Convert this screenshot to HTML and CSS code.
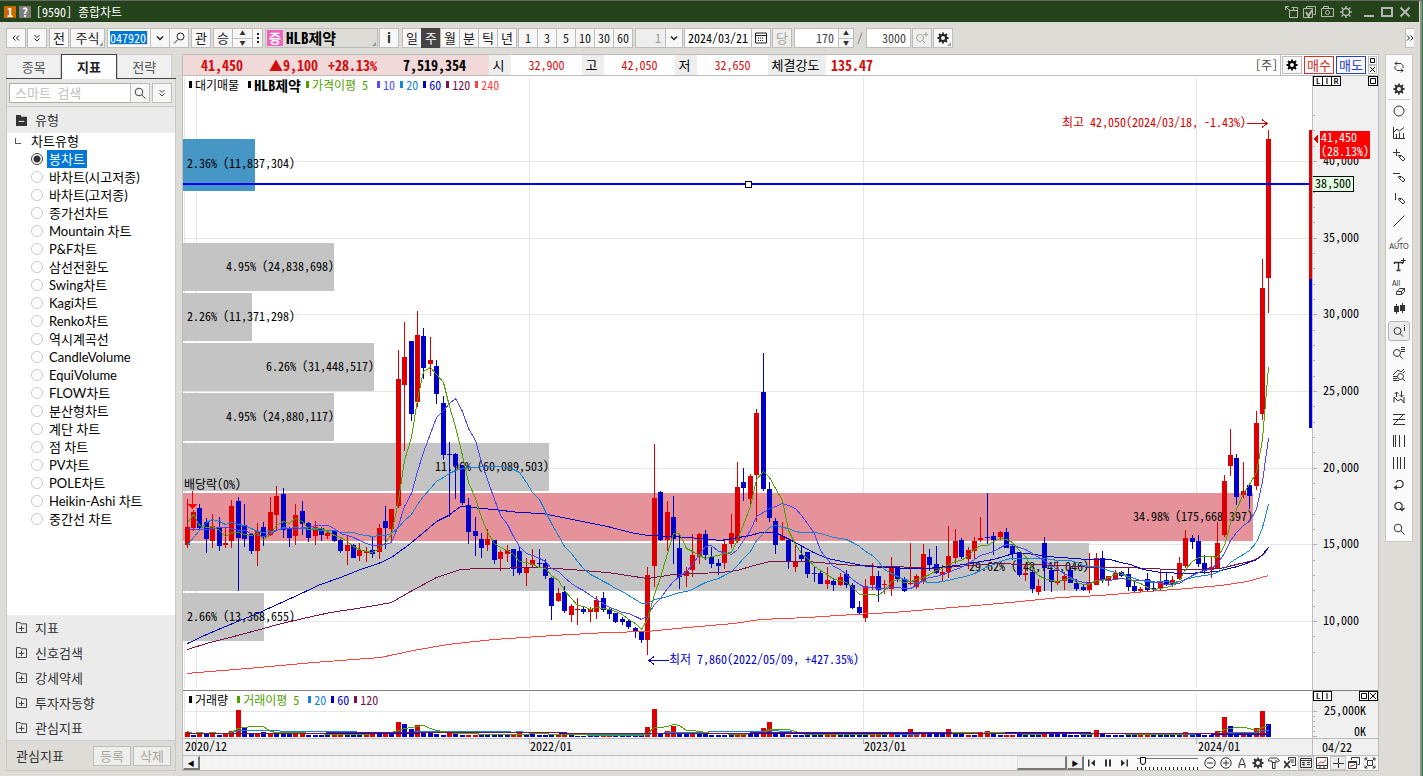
FILE: index.html
```html
<!DOCTYPE html>
<html lang="ko">
<head>
<meta charset="utf-8">
<title>[9590] 종합차트</title>
<link rel="stylesheet" href="styles.css">
</head>
<body>
<svg class="sprite" aria-hidden="true">
  <symbol id="gear" viewBox="0 0 12 12"><circle cx="6" cy="6" r="3" fill="none" stroke="currentColor" stroke-width="2"/><path d="M6 .5v2M6 9.500v2M.5 6h2M9.500 6h2M2 2l1.500 1.500M8.500 8.500L10 10M10 2L8.500 3.500M3.500 8.500L2 10" stroke="currentColor" stroke-width="1.800"/></symbol>
  <symbol id="gear-thin" viewBox="0 0 12 12"><circle cx="6" cy="6" r="3.500" fill="none" stroke="currentColor" stroke-width="1.500"/><path d="M6 0v2M6 10v2M0 6h2M10 6h2M1.500 1.500l1.500 1.500M9 9l1.500 1.500M10.500 1.500L9 3M3 9l-1.500 1.500" stroke="currentColor" stroke-width="1.500"/></symbol>
  <symbol id="search" viewBox="0 0 12 12"><g fill="none" stroke="currentColor"><circle cx="5" cy="5" r="3.800"/><path d="M8 8l3.500 3.500"/></g></symbol>
  <symbol id="search-l" viewBox="0 0 12 12"><g fill="none" stroke="currentColor"><circle cx="7.500" cy="4.500" r="3.500"/><path d="M5 7.500L1 11.500"/></g></symbol>
  <symbol id="left2" viewBox="0 0 12 12"><path d="M5.500 3.500L3 6l2.500 2.500M9 3.500L6.500 6 9 8.500" fill="none" stroke="currentColor"/></symbol>
  <symbol id="right2" viewBox="0 0 12 12"><path d="M3 3.500L5.500 6 3 8.500M6.500 3.500L9 6 6.500 8.500" fill="none" stroke="currentColor"/></symbol>
  <symbol id="down2" viewBox="0 0 12 12"><path d="M3.500 3L6 5.500 8.500 3M3.500 6.500L6 9l2.500-2.500" fill="none" stroke="currentColor"/></symbol>
  <symbol id="chev" viewBox="0 0 12 12"><path d="M3 4.500l3 3 3-3" fill="none" stroke="currentColor" stroke-width="1.500"/></symbol>
  <symbol id="cal" viewBox="0 0 12 12"><path d="M.5 1h11v10H.5zM.5 3.500h11" fill="none" stroke="currentColor"/><path d="M3 6h6M3 8.500h6" stroke="currentColor" stroke-dasharray="1 1"/></symbol>
  <symbol id="zoom-plus" viewBox="0 0 12 12"><g fill="none" stroke="currentColor"><circle cx="4" cy="6" r="3.500"/><path d="M6.500 8.500L9 11M10 0v5M7.500 2.500h5"/></g></symbol>
  <symbol id="win-out" viewBox="0 0 14 12"><g fill="none" stroke="currentColor"><path d="M4.500 3.500v8h8v-10h-6M5 4.500h8M8.500 2v2M.5.500l4 4M.5 4V.500H4"/></g></symbol>
  <symbol id="win-check" viewBox="0 0 14 12"><g fill="none" stroke="currentColor"><path d="M3.500 2.500v-2h9v8h-2M.5 2.500h9v9h-9z"/><path d="M3 6l2.500 4L9 4" stroke-width="2"/></g></symbol>
  <symbol id="camera" viewBox="0 0 14 12"><g fill="none" stroke="currentColor"><path d="M.5 2.500h12v8H.5zM2.500 2V.500h5V2"/><circle cx="6.500" cy="6.500" r="2"/></g></symbol>
  <symbol id="folder-plus" viewBox="0 0 12 12"><path d="M.5.500h4l1 1.500h6v9.500H.5zM6 4v6M3 7h6" fill="none" stroke="currentColor"/></symbol>
  <symbol id="folder-minus" viewBox="0 0 12 12"><path d="M0 0h5l1 2h6v10H0z" fill="currentColor"/><path d="M3 7h6" stroke="#fff"/></symbol>
  <symbol id="t-cycle" viewBox="0 0 14 14"><path d="M5 1.500L3 3.500l2 2M3 3.500h6l2 2V8M9 8.500l2 2-2 2M11 10.500H5l-2-2V6" fill="none" stroke="currentColor"/></symbol>
  <symbol id="t-circle" viewBox="0 0 14 14"><circle cx="7" cy="7" r="5" fill="none" stroke="currentColor"/></symbol>
  <symbol id="t-graph" viewBox="0 0 14 14"><path d="M1.500 1v11.500H13M4.500 12V8M7.500 12V6.500M11.500 12V7M2 6l3-3 2.500 2L12 1.500" fill="none" stroke="currentColor"/></symbol>
  <symbol id="t-plus-pen" viewBox="0 0 14 14"><path d="M4.500 1v7M1 4.500h7M6.500 7.500h3l3.500 3.500-2 2-4-4zM9 8l-2 2" fill="none" stroke="currentColor"/></symbol>
  <symbol id="t-line-pen" viewBox="0 0 14 14"><path d="M1 3.500h7M6.500 6.500h3l3.500 3.500-2 2-4-4zM9 7l-2 2" fill="none" stroke="currentColor"/></symbol>
  <symbol id="t-vline-pen" viewBox="0 0 14 14"><path d="M3.500 1v7M6.500 6.500h3l3.500 3.500-2 2-4-4zM9 7l-2 2" fill="none" stroke="currentColor"/></symbol>
  <symbol id="t-line" viewBox="0 0 14 14"><path d="M1.500 12.500l11-11" fill="none" stroke="currentColor"/></symbol>
  <symbol id="t-slash" viewBox="0 0 14 6"><path d="M5 5.500l5-5" fill="none" stroke="currentColor"/></symbol>
  <symbol id="t-text" viewBox="0 0 14 14"><path d="M2.500 6V4.500h8V6M6.500 4.500v8M4.500 12.500h4" fill="none" stroke="currentColor" stroke-width="1.400"/><path d="M11.500 0v5M9 2.500h5" stroke="currentColor"/></symbol>
  <symbol id="t-eraser" viewBox="0 0 14 8"><path d="M4.500 5.500l3-4h5v3l-3 3h-5zM4.500 4.500h5l3-3M9.500 4.500v3" fill="none" stroke="currentColor"/></symbol>
  <symbol id="t-candles" viewBox="0 0 14 14"><path d="M2 4h5v6H2zM8 3h5v6H8z" fill="currentColor"/><path d="M4.500 2v10M10.500 1v10" stroke="currentColor"/></symbol>
  <symbol id="t-search-i" viewBox="0 0 14 14"><g fill="none" stroke="currentColor"><circle cx="5.500" cy="7" r="3.500"/><path d="M8 9.500l3 3M12.500 3v4M12.500 1v1"/></g></symbol>
  <symbol id="t-search-list" viewBox="0 0 14 14"><g fill="none" stroke="currentColor"><circle cx="5" cy="7" r="3.500"/><path d="M7.500 9.500l3 3M9 1.500h4M9 3.500h4M9 5.500h4"/></g></symbol>
  <symbol id="t-search-wave" viewBox="0 0 14 14"><g fill="none" stroke="currentColor"><circle cx="8.500" cy="8.500" r="3"/><path d="M10.500 10.500L13 13M1 7l5-5 3 2 3-3M1 8.500h4M1 10.500h4M1 12.500h6M11 5l2-2"/></g></symbol>
  <symbol id="t-swap" viewBox="0 0 14 14"><path d="M2 12.500V7l4 4 3-2 3 4V7M4.500 7V2M2.500 4l2-2 2 2M9.500 1v6M7.500 5l2 2 2-2" fill="none" stroke="currentColor"/></symbol>
  <symbol id="t-fib" viewBox="0 0 14 14"><path d="M1 2.500h12M1 7.500h12M1 12.500h12M2 12l9-9" fill="none" stroke="currentColor"/></symbol>
  <symbol id="t-bars1" viewBox="0 0 14 14"><path d="M1.500 1v12M3.500 1v12M7.500 1v12M12.500 1v12" stroke="currentColor"/></symbol>
  <symbol id="t-bars2" viewBox="0 0 14 14"><path d="M1.500 1v12M5.500 1v12M8.500 1v12M12.500 1v12" stroke="currentColor"/></symbol>
  <symbol id="t-undo" viewBox="0 0 14 14"><path d="M4 4.500l2-2h3l2 2v3l-2 2H3M5 7.500l-2.500 2 2.500 2" fill="none" stroke="currentColor" stroke-width="1.200"/></symbol>
  <symbol id="t-redo" viewBox="0 0 14 14"><path d="M9 9.500H5l-2-2v-3l2-2h3l2 2v5M12.500 8L10 10.500 8 8" fill="none" stroke="currentColor" stroke-width="1.200"/></symbol>
  <symbol id="b-first" viewBox="0 0 12 12"><path d="M2 2.500h1.500v7H2zM9 2.500v7L5 6z" fill="currentColor"/></symbol>
  <symbol id="b-pause" viewBox="0 0 12 12"><path d="M3 2.500h2v7H3zM7 2.500h2v7H7z" fill="currentColor"/></symbol>
  <symbol id="b-last" viewBox="0 0 12 12"><path d="M8.500 2.500H10v7H8.500zM3 2.500v7L7 6z" fill="currentColor"/></symbol>
  <symbol id="b-minus" viewBox="0 0 12 12"><g fill="none" stroke="currentColor"><circle cx="6" cy="6" r="5.200"/><path d="M3 6h6"/></g></symbol>
  <symbol id="b-plus" viewBox="0 0 12 12"><g fill="none" stroke="currentColor"><circle cx="6" cy="6" r="5.200"/><path d="M3 6h6M6 3v6"/></g></symbol>
  <symbol id="b-a" viewBox="0 0 12 12"><path d="M3 11V8l2.500-6.500h1L9 8v3M3.500 7.500h5" fill="none" stroke="currentColor"/></symbol>
  <symbol id="b-hammer" viewBox="0 0 12 12"><path d="M.5 2.500l2-1.500h6l3 2.500-2 1.500-1.500-1.500v2h-4v-1.500H.5zM4.500 5.500v6h2.500v-6" fill="none" stroke="currentColor"/></symbol>
  <symbol id="b-excel" viewBox="0 0 12 12"><path d="M4.500 3V.500h7v8H8M6 3h4M7 5h3" fill="none" stroke="currentColor"/><path d="M0 4l6 7M6 4l-6 7" stroke="currentColor" stroke-width="1.800"/></symbol>
  <symbol id="b-table" viewBox="0 0 12 12"><path d="M.5 1.500h11v9H.5zM.5 3.500h11M4 5v4M2 5.500h2M2 7.500h2M7 5.500h3M7 7.500h3" fill="none" stroke="currentColor"/></symbol>
  <symbol id="b-chart" viewBox="0 0 12 12"><path d="M.5.500h11v11H.5zM.5 8.500h11M4 9v2M8 9v2" fill="none" stroke="currentColor"/><path d="M2 7l2.500-2L7 6l3-3.500" fill="none" stroke="#d33"/></symbol>
  <symbol id="b-cross" viewBox="0 0 12 12"><path d="M6.500 1v10M1 6.500h11" stroke="currentColor"/></symbol>
  <symbol id="b-wins" viewBox="0 0 12 12"><path d="M3.500 3V.500h8v7h-2M.5 4.500h8v7h-8zM.5 5.500h8" fill="none" stroke="currentColor"/><path d="M2 10l2-2 1 1 2-2" fill="none" stroke="#d33"/></symbol>
  <symbol id="b-fit" viewBox="0 0 12 12"><path d="M3.500 3.500h5v5h-5zM1 3.500V1h2.500M8.500 1H11v2.500M11 8.500V11H8.500M3.500 11H1V8.500M1 1l2.500 2.500M11 1L8.500 3.500M11 11L8.500 8.500M1 11l2.500-2.500" fill="none" stroke="currentColor"/></symbol>
</svg>

<div class="window">
  <header class="titlebar">
    <span class="badge badge-num">1</span><span class="badge badge-help">?</span>
    <h1 class="title">[9590] 종합차트</h1>
    <div class="title-tools">
      <button aria-label="분리"><svg class="i14"><use href="#win-out"/></svg></button>
      <button aria-label="선택"><svg class="i14"><use href="#win-check"/></svg></button>
      <button aria-label="캡처"><svg class="i14"><use href="#camera"/></svg></button>
      <button aria-label="설정"><svg class="i12"><use href="#gear-thin"/></svg></button>
      <button class="wc first" aria-label="최소화"><svg class="i12" viewBox="0 0 12 12"><path d="M1 10h10" stroke="currentColor" stroke-width="2"/></svg></button>
      <button class="wc" aria-label="최대화"><svg class="i12" viewBox="0 0 12 12"><path d="M1 2h10v8H1z" fill="none" stroke="currentColor" stroke-width="2"/></svg></button>
      <button class="wc" aria-label="닫기"><svg class="i12" viewBox="0 0 12 12"><path d="M1.500 1.500l9 9M10.500 1.500l-9 9" stroke="currentColor" stroke-width="2"/></svg></button>
    </div>
  </header>

  <div class="toolbar">
    <button class="btn" aria-label="이전"><svg class="i12"><use href="#left2"/></svg></button>
    <button class="btn" aria-label="펼치기"><svg class="i12"><use href="#down2"/></svg></button>
    <button class="btn after">전</button>
    <button class="btn w34 corner">주식</button>
    <div class="join after">
      <input class="field code" aria-label="종목코드" value="047920"><button class="btn" aria-label="종목 목록"><svg class="i12"><use href="#chev"/></svg></button><button class="btn" aria-label="종목 찾기"><svg class="i12"><use href="#search-l"/></svg></button>
    </div>
    <button class="btn after">관</button>
    <div class="join after"><button class="btn">승</button><span class="spin w20"><button aria-label="위">▲</button><button aria-label="아래">▼</button></span><button class="btn w10" aria-label="더보기"><svg class="dots" viewBox="0 0 2 10"><path d="M0 0h2v2H0zM0 4h2v2H0zM0 8h2v2H0z" fill="currentColor"/></svg></button></div>
    <button class="stock after corner"><span class="tag">증</span>HLB제약</button>
    <button class="btn info">i</button>
    <div class="join period"><button class="btn">일</button><button class="btn on">주</button><button class="btn">월</button><button class="btn">분</button><button class="btn">틱</button><button class="btn">년</button></div>
    <div class="join minutes"><button class="btn">1</button><button class="btn">3</button><button class="btn">5</button><button class="btn">10</button><button class="btn">30</button><button class="btn">60</button></div>
    <div class="join after"><input class="field off" aria-label="분 단위" value="1" disabled><button class="btn w18" aria-label="분 목록"><svg class="i12"><use href="#chev"/></svg></button></div>
    <div class="join"><input class="field date" aria-label="일자" value="2024/03/21"><button class="btn" aria-label="달력"><svg class="i12"><use href="#cal"/></svg></button></div>
    <button class="btn dim">당</button>
    <div class="join after"><input class="field num" aria-label="표시 봉수" value="170"><span class="spin w16"><button aria-label="증가">▲</button><button aria-label="감소">▼</button></span></div>
    <span class="slash">/</span>
    <input class="field num" aria-label="전체 봉수" value="3000">
    <button class="btn dim" aria-label="확대"><svg class="i12 open"><use href="#zoom-plus"/></svg></button>
    <button class="btn corner" aria-label="차트 설정"><svg class="i12"><use href="#gear"/></svg></button>
    <button class="btn more" aria-label="더보기"><svg class="i12"><use href="#right2"/></svg></button>
  </div>

  <div class="content">
    <aside class="side">
      <nav class="tabs"><button>종목</button><button class="active">지표</button><button>전략</button></nav>
      <div class="panel">
        <div class="searchrow"><div class="join grow"><input class="field" aria-label="검색" placeholder="스마트 검색"><button class="btn" aria-label="검색"><svg class="i12"><use href="#search"/></svg></button></div><button class="btn" aria-label="펼치기"><svg class="i12"><use href="#down2"/></svg></button></div>
        <button class="group head"><svg class="i11"><use href="#folder-minus"/></svg>유형</button>
        <fieldset class="types">
          <legend>차트유형</legend>
          <label><input type="radio" name="t" checked><span>봉차트</span></label>
          <label><input type="radio" name="t"><span>바차트(시고저종)</span></label>
          <label><input type="radio" name="t"><span>바차트(고저종)</span></label>
          <label><input type="radio" name="t"><span>종가선차트</span></label>
          <label><input type="radio" name="t"><span>Mountain 차트</span></label>
          <label><input type="radio" name="t"><span>P&amp;F차트</span></label>
          <label><input type="radio" name="t"><span>삼선전환도</span></label>
          <label><input type="radio" name="t"><span>Swing차트</span></label>
          <label><input type="radio" name="t"><span>Kagi차트</span></label>
          <label><input type="radio" name="t"><span>Renko차트</span></label>
          <label><input type="radio" name="t"><span>역시계곡선</span></label>
          <label><input type="radio" name="t"><span>CandleVolume</span></label>
          <label><input type="radio" name="t"><span>EquiVolume</span></label>
          <label><input type="radio" name="t"><span>FLOW차트</span></label>
          <label><input type="radio" name="t"><span>분산형차트</span></label>
          <label><input type="radio" name="t"><span>계단 차트</span></label>
          <label><input type="radio" name="t"><span>점 차트</span></label>
          <label><input type="radio" name="t"><span>PV차트</span></label>
          <label><input type="radio" name="t"><span>POLE차트</span></label>
          <label><input type="radio" name="t"><span>Heikin-Ashi 차트</span></label>
          <label><input type="radio" name="t"><span>중간선 차트</span></label>
        </fieldset>
        <button class="group"><svg class="i11"><use href="#folder-plus"/></svg>지표</button>
        <button class="group"><svg class="i11"><use href="#folder-plus"/></svg>신호검색</button>
        <button class="group"><svg class="i11"><use href="#folder-plus"/></svg>강세약세</button>
        <button class="group"><svg class="i11"><use href="#folder-plus"/></svg>투자자동향</button>
        <button class="group"><svg class="i11"><use href="#folder-plus"/></svg>관심지표</button>
        <div class="sidefoot"><span>관심지표</span><button class="btn dim" disabled>등록</button><button class="btn dim" disabled>삭제</button></div>
      </div>
    </aside>

    <main class="chart">
      <div class="quote">
        <div class="q-main"><b class="q-price">41,450</b><b class="q-diff">▲9,100</b><b class="q-rate">+28.13%</b><b class="q-vol">7,519,354</b></div>
        <span class="q-label">시</span><span class="q-val">32,900</span>
        <span class="q-label">고</span><span class="q-val">42,050</span>
        <span class="q-label">저</span><span class="q-val">32,650</span>
        <span class="q-label wide">체결강도</span><b class="q-power">135.47</b>
        <span class="q-cycle">[주]</span>
        <button class="btn" aria-label="설정"><svg class="i12"><use href="#gear"/></svg></button>
        <button class="trade buy">매수</button><button class="trade sell">매도</button>
        <span class="q-mini"><button aria-label="최대화"><svg viewBox="0 0 9 9"><path d="M2.500 2.500h4v4h-4z" fill="none" stroke="currentColor"/></svg></button><button aria-label="닫기"><svg viewBox="0 0 9 9"><path d="M2 2l5 5M7 2L2 7" stroke="currentColor"/></svg></button></span>
      </div>
      <div class="plot price">
        <svg class="canvas" id="price"></svg>
        <ul class="legend"><li class="c-k kr">대기매물</li><li class="c-k bold">HLB제약</li><li class="c-5 kr">가격이평 5</li><li class="c-10">10</li><li class="c-20">20</li><li class="c-60">60</li><li class="c-120">120</li><li class="c-240">240</li></ul>
      </div>
      <div class="axis">
        <svg class="canvas" id="priceAxis"></svg>
        <div class="axisbar"><span><button>L</button><button>I</button><button>R</button></span><button aria-label="최대화"><svg viewBox="0 0 8 8"><path d="M1.500 1.500h5v5h-5z" fill="none" stroke="#000"/></svg></button></div>
      </div>
      <div class="plot volume">
        <svg class="canvas" id="volume"></svg>
        <ul class="legend"><li class="c-k kr">거래량</li><li class="c-5 kr">거래이평 5</li><li class="c-20">20</li><li class="c-60">60</li><li class="c-120">120</li></ul>
      </div>
      <div class="axis volume">
        <svg class="canvas" id="volumeAxis"></svg>
        <div class="axisbar"><span><button>L</button><button>I</button></span><span><button aria-label="최대화"><svg viewBox="0 0 8 8"><path d="M1.500 1.500h5v5h-5z" fill="none" stroke="#000"/></svg></button><button aria-label="닫기"><svg viewBox="0 0 8 8"><path d="M1 1l6 6M7 1L1 7" stroke="#000"/></svg></button></span></div>
      </div>
      <div class="dates"><svg class="canvas" id="dates"></svg></div>
      <div class="today">04/22</div>
      <div class="bottom">
        <button class="sb" aria-label="왼쪽">◀</button><div class="track"><div class="thumb"></div></div><button class="sb" aria-label="오른쪽">▶</button>
        <div class="play"><button aria-label="처음"><svg class="i12"><use href="#b-first"/></svg></button><button aria-label="정지"><svg class="i12"><use href="#b-pause"/></svg></button><button aria-label="끝"><svg class="i12"><use href="#b-last"/></svg></button></div>
        <input class="slider" type="range" aria-label="속도" value="5">
        <div class="bt">
          <button aria-label="축소"><svg class="i12"><use href="#b-minus"/></svg></button><button aria-label="확대"><svg class="i12"><use href="#b-plus"/></svg></button><button aria-label="글자"><svg class="i12"><use href="#b-a"/></svg></button><button aria-label="설정"><svg class="i12"><use href="#gear"/></svg></button><button aria-label="도구"><svg class="i12"><use href="#b-hammer"/></svg></button><button aria-label="엑셀"><svg class="i12"><use href="#b-excel"/></svg></button><button class="on" aria-label="표"><svg class="i12"><use href="#b-table"/></svg></button><button aria-label="차트"><svg class="i12"><use href="#b-chart"/></svg></button><button class="on" aria-label="십자선"><svg class="i12"><use href="#b-cross"/></svg></button><button aria-label="창"><svg class="i12"><use href="#b-wins"/></svg></button><button aria-label="맞춤"><svg class="i12"><use href="#b-fit"/></svg></button>
        </div>
      </div>
    </main>

    <nav class="tools">
      <button aria-label="전환"><svg class="i14"><use href="#t-cycle"/></svg></button>
      <button class="last" aria-label="설정"><svg class="i12"><use href="#gear"/></svg></button>
      <button aria-label="원"><svg class="i14"><use href="#t-circle"/></svg></button>
      <button aria-label="그래프"><svg class="i14"><use href="#t-graph"/></svg></button>
      <button aria-label="십자 그리기"><svg class="i14"><use href="#t-plus-pen"/></svg></button>
      <button aria-label="수평선"><svg class="i14"><use href="#t-line-pen"/></svg></button>
      <button aria-label="수직선"><svg class="i14"><use href="#t-vline-pen"/></svg></button>
      <button aria-label="추세선"><svg class="i14"><use href="#t-line"/></svg></button>
      <button class="stack"><svg class="w14h6"><use href="#t-slash"/></svg><span>AUTO</span></button>
      <button aria-label="텍스트"><svg class="i14"><use href="#t-text"/></svg></button>
      <button class="stack all"><span>All</span><svg class="w14h8"><use href="#t-eraser"/></svg></button>
      <button aria-label="봉"><svg class="i14"><use href="#t-candles"/></svg></button>
      <button class="on" aria-label="정보"><svg class="i14"><use href="#t-search-i"/></svg></button>
      <button aria-label="목록"><svg class="i14"><use href="#t-search-list"/></svg></button>
      <button aria-label="패턴"><svg class="i14"><use href="#t-search-wave"/></svg></button>
      <button aria-label="반전"><svg class="i14"><use href="#t-swap"/></svg></button>
      <button aria-label="피보나치"><svg class="i14"><use href="#t-fib"/></svg></button>
      <button aria-label="시간대"><svg class="i14"><use href="#t-bars1"/></svg></button>
      <button aria-label="등간격"><svg class="i14"><use href="#t-bars2"/></svg></button>
      <button aria-label="되돌리기"><svg class="i14"><use href="#t-undo"/></svg></button>
      <button aria-label="다시"><svg class="i14"><use href="#t-redo"/></svg></button>
      <button aria-label="찾기"><svg class="i12"><use href="#search"/></svg></button>
    </nav>
  </div>
</div>
<script src="chart.js"></script>
</body>
</html>
```
FILE: styles.css
```css
:root {
  --mono: "Noto Sans Mono CJK KR", "Noto Sans CJK KR", sans-serif;
  --ui: Lato, "Noto Sans CJK KR", sans-serif;
  --line: #bdbdbd;
  --ink: #3c3c3c;
  --up: #d01010;
}
* { box-sizing: border-box; }
body { margin: 0; background: #dddcd7; font: 12px/14px var(--mono); color: #000; }
button, input { font: inherit; color: inherit; margin: 0; padding: 0; border: 0; border-radius: 0; background: none; min-width: 0; }
button { display: inline-flex; align-items: center; justify-content: center; white-space: nowrap; }
svg { display: block; flex: none; }
.sprite { position: absolute; width: 0; height: 0; }
.i11 { width: 11px; height: 11px; }
.i12 { width: 12px; height: 12px; }
.i14 { width: 14px; height: 14px; }
.w14h6 { width: 14px; height: 6px; }
.w14h8 { width: 14px; height: 8px; }
.open { overflow: visible; }
.w10.btn { width: 11px; }
.w18.btn { width: 18px; }
.w34.btn { width: 35px; }

.window { min-height: 100vh; display: flex; flex-direction: column; border-top: 1px solid #666; border-right: 1px solid #2b7d4b; box-shadow: inset -2px 0 #8f8f8c; padding-right: 3px; }
.titlebar { height: 21px; background: #24431b; display: flex; align-items: center; padding-left: 4px; color: #fff; }
.badge { width: 12px; height: 12px; margin-right: 3px; display: flex; align-items: center; justify-content: center; font-weight: bold; background: #c86a00; line-height: 12px; }
.badge-help { background: #7d7d7d; }
.title { margin: 0 0 0 2px; font: 12px/14px var(--mono); flex: 1; }
.title-tools { display: flex; align-items: center; gap: 5px; color: #b4b8b0; padding-right: 8px; }
.title-tools button { width: 13px; height: 14px; }
.title-tools .first { margin-left: 5px; }

.toolbar { display: flex; align-items: center; height: 32px; padding: 0 5px 0 6px; gap: 1px; }
.btn { width: 20px; height: 20px; border: 1px solid var(--line); background: #f7f7f7; flex: none; font-size: 13px; }
.toolbar .btn { color: #222; }
.btn.dim, .toolbar .btn.dim { color: #a8a69c; background: #eeeeec; }
.after { margin-left: 1px; }
.corner { position: relative; }
.corner::after { content: ""; position: absolute; right: 1px; bottom: 1px; border: 2px solid; border-color: transparent #999 #999 transparent; }
.join { display: flex; }
.join > * + * { margin-left: -1px; }
.join.grow { flex: 1; min-width: 0; }
.join.grow .field { flex: 1; width: 0; }
.field { height: 20px; border: 1px solid var(--line); background: #fff; padding-bottom: 2px; }
.code { width: 44px; padding: 2px 3px 3px 2px; background: #0078d7 content-box; box-shadow: inset 0 0 0 2px #fff; color: #fff; line-height: 13px; }
.field.off { width: 31px; background: #eee; color: #999; text-align: right; padding-right: 4px; }
.field.date { width: 68px; padding-left: 3px; }
.field.num { width: 45px; text-align: right; padding-right: 4px; color: #444; }
.spin { display: flex; flex-direction: column; height: 20px; border: 1px solid var(--line); background: #f7f7f7; }
.spin button { flex: 1; font-size: 6px; line-height: 8px; color: #333; }
.spin button + button { border-top: 1px solid var(--line); }
.w20 { width: 21px; }
.w16 { width: 16px; }
.dots { width: 2px; height: 10px; }
.stock { width: 113px; height: 20px; border: 1px solid var(--line); justify-content: flex-start; padding-left: 1px; gap: 3px; font-weight: bold; font-size: 15px; }
.tag { width: 16px; height: 16px; background: #f062c0; color: #fff; font-size: 13px; line-height: 16px; }
.info { font-weight: bold; }
.period { margin: 0 0 0 2px; }
.period .on { background: #444; color: #fff; border-color: #444; }
.minutes .btn { font-size: 12px; }
.slash { width: 10px; text-align: center; color: #777; }
.more.btn { width: 9px; margin-left: auto; overflow: hidden; border-right: 0; }

.content { flex: 1; display: flex; gap: 6px; padding: 0 6px 5px; min-height: 0; align-items: stretch; }
.side { width: 170px; flex: none; display: flex; flex-direction: column; }
.tabs { display: flex; height: 25px; border-bottom: 1px solid #444; padding-right: 4px; color: #555; }
.tabs button { flex: 1; background: #f0f0f0; border: 1px solid #ccc; border-bottom: 0; font-size: 13px; }
.tabs .active { background: #fff; border-color: #444; color: #222; font-weight: bold; height: 25px; }
.panel { flex: 1; display: flex; flex-direction: column; border: 1px solid #c8c8c8; border-top: 0; background: #ebebeb; }
.searchrow { display: flex; gap: 2px; padding: 4px 3px 3px 2px; height: 28px; border-bottom: 1px solid #ccc; background: #e6e6e3; color: #444; }
.searchrow .field { padding-left: 5px; border-color: #aaa; font-size: 13px; }
.searchrow .field::placeholder { color: #c0c0c0; opacity: 1; }
.group { height: 25px; width: 100%; justify-content: flex-start; padding-left: 9px; gap: 8px; color: #333; font-size: 13px; }
.group.head { height: 26px; }
.types { flex: 1; margin: 0; border: 0; padding: 0 0 0 24px; background: #fff; font: 13px/18px var(--ui); min-width: 0; }
.types legend { float: left; width: 100%; padding: 0; height: 17px; line-height: 17px; }
.types legend::before { content: ""; float: left; width: 5px; height: 5px; border: 1px solid #555; border-width: 0 0 1px 1px; margin: 5px 0 0 -16px; }
.types label { display: flex; align-items: center; height: 18px; clear: both; }
.types input { appearance: none; width: 12px; height: 12px; border: 1px solid #c8c8c8; border-radius: 50%; background: #fff; }
.types input:checked { border-color: #444; background: radial-gradient(circle, #333 3px, #fff 4px); }
.types span { margin-left: 4px; padding: 0 2px; line-height: 18px; }
.types input:checked + span { background: #0078d7; color: #fff; }
.sidefoot { height: 30px; display: flex; align-items: center; gap: 2px; border-top: 1px solid #ccc; background: #dddcd7; color: #333; padding: 0 4px 0 9px; font-size: 13px; }
.sidefoot span { flex: 1; }
.sidefoot .btn { width: 38px; }

.chart { flex: 1; min-width: 0; display: grid; grid-template-columns: minmax(0, 1fr) 66px; grid-template-rows: 22px minmax(0, 1fr) 48px 17px 15px; border: solid var(--line); border-width: 0 1px 1px; background: #fff; }
.quote { grid-column: 1 / -1; display: flex; align-items: center; border: solid var(--line); border-width: 1px 0; line-height: 20px; }
.quote > * { flex: none; }
.q-main { width: 306px; background: #f2d9d9; color: var(--up); display: flex; font-size: 14px; }
.q-price { width: 60px; text-align: right; }
.q-diff { width: 75px; text-align: right; }
.q-rate { width: 59px; text-align: right; }
.q-vol { width: 89px; text-align: right; color: #000; }
.q-label { width: 22px; text-align: center; background: #eee; height: 20px; padding-right: 3px; font-size: 13px; }
.q-label.wide { width: 58px; padding: 0 3px 0 0; }
.q-val { width: 71px; text-align: center; color: var(--up); }
.q-power { font-size: 14px; color: var(--up); padding-left: 5px; flex: 1; }
.q-cycle { border-right: 1px solid var(--line); padding-right: 2px; color: #444; }
.quote .btn { height: 18px; margin: 0 2px 0 1px; }
.trade { width: 30px; height: 18px; border: 1px solid #d03030; color: #d03030; margin-right: 2px; background: #fafafa; font-size: 13px; }
.trade.sell { border-color: #2040d0; color: #2040d0; }
.q-mini { display: flex; flex-direction: column; padding-right: 1px; }
.q-mini button { width: 9px; height: 9px; border: 1px solid var(--line); }
.q-mini svg { width: 9px; height: 9px; }

.plot, .axis { display: grid; min-height: 0; min-width: 0; }
.plot > *, .axis > * { grid-area: 1 / 1; min-width: 0; min-height: 0; }
.canvas { width: 100%; height: 100%; overflow: hidden; font: 12px/14px var(--mono); shape-rendering: crispEdges; }
.axis { background: #f0f0f0; border-left: 1px solid var(--line); }
.volume { border-top: 1px solid #808080; }
.legend { list-style: none; margin: 0; padding: 1px 0 0 6px; display: flex; gap: 5px; height: 16px; z-index: 1; }
.legend li { display: flex; align-items: center; gap: 3px; white-space: pre; }
.legend li::before { content: ""; width: 3px; height: 7px; background: currentColor; }
.legend .kr { padding-right: 4px; }
.legend .bold { font-weight: bold; font-size: 14px; }
.c-k { color: #000; }
.c-5 { color: #50a000; }
.c-10 { color: #5050f8; }
.c-20 { color: #1484d8; }
.c-60 { color: #0000c8; }
.c-120 { color: #78144c; }
.c-240 { color: #ff4444; }
.axisbar { display: flex; justify-content: space-between; height: 10px; z-index: 1; }
.axisbar span { display: flex; }
.axisbar button { width: 10px; height: 10px; border: 1px solid #000; background: #fff; font: bold 8px/8px var(--ui); }
.axisbar button + button { margin-left: -1px; }
.axisbar svg { width: 8px; height: 8px; }
.dates, .today { background: #f0f0f0; border-top: 1px solid var(--line); min-width: 0; min-height: 0; }
.dates .canvas { overflow: visible; }
.today { border-left: 1px solid var(--line); padding-left: 9px; line-height: 16px; }
.bottom { grid-column: 1 / -1; display: flex; align-items: center; border-top: 1px solid var(--line); background: #fafafa; color: #333; }
.sb { width: 17px; height: 14px; border: solid; border-width: 1px 2px 2px 1px; border-color: #e8e8e8 #777 #777 #e8e8e8; background: #f0f0f0; font-size: 7px; color: #000; }
.track { flex: 1; height: 14px; background: conic-gradient(#ececec 25%, #fff 0 50%, #ececec 0 75%, #fff 0) 0 0 / 2px 2px; display: flex; justify-content: flex-end; }
.thumb { width: 50px; height: 14px; border: solid; border-width: 1px 2px 2px 1px; border-color: #ddd #777 #777 #ddd; background: #f0f0f0; }
.play { display: flex; gap: 4px; padding: 0 7px 0 2px; }
.slider { appearance: none; width: 61px; height: 13px; margin-right: 4px; background: linear-gradient(#777, #777) 0 1px / 100% 1px no-repeat, repeating-linear-gradient(90deg, #222 0 1px, transparent 1px 4px) 0 100% / 100% 3px no-repeat; }
.slider::-webkit-slider-thumb { appearance: none; width: 6px; height: 8px; margin-bottom: 4px; border: 1px solid #000; background: #fff; border-radius: 0 0 3px 3px; }
.bt { display: flex; }
.bt button, .play button { width: 16px; height: 14px; }
.play button { width: 12px; }
.bt .on { background: #ececec; box-shadow: inset 0 0 0 1px #c4c4c4; }

.tools { width: 28px; flex: none; align-self: flex-start; display: flex; flex-direction: column; border: 1px solid #c8c8c8; background: #fafafa; color: #333; padding: 1px 2px; }
.tools button { height: 22px; }
.tools .last { border-bottom: 1px solid #c8c8c8; }
.tools .on { border: 1px solid #b4b4b4; border-radius: 3px; background: #ececec; height: 20px; margin: 1px 0; }
.stack { flex-direction: column; font: 7px/7px var(--ui); }
.stack.all { align-items: flex-start; padding-left: 4px; }

.t-up { fill: #d00000; }
.t-down { fill: #0000c8; }
.ln { fill: none; stroke-width: 1; }
```
FILE: chart.js
```js
// Geometry of the chart at its design size; scaled to the element on every draw.
const LEFT = 183, TOP = 76, W = 1129, H = 614;
const UP = '#de0000', DOWN = '#0000c8';
const COLORS = { 5: '#50a000', 10: '#4848ff', 20: '#1484d8', 60: '#0000c8', 120: '#78144c', 240: '#ff4444' };

// direction, high, body top, body bottom, low
const CANDLES = `r499,527,545,548 r510,512,528,531 b504,508,528,531 b518,522,539,553 r514,526,541,548 b517,527,546,551 r527,543,545,548 r500,506,541,548 b497,501,538,591 b504,525,539,547
b533,534,551,554 r523,531,551,566 b522,527,537,546 r497,512,535,536 r486,496,515,531 b488,494,530,538 b527,529,538,547 r504,515,536,545 b501,511,524,535 b522,523,538,542
r521,527,536,545 b527,528,535,541 r530,533,536,539 b530,531,541,542 b539,540,551,553 r535,545,551,565 b544,545,558,558 r543,550,556,561 r547,551,553,562 b536,550,554,558
r524,528,552,559 b506,521,528,549 r509,509,529,543 r350,379,506,508 r322,357,385,451 b341,341,414,421 r311,335,402,407 b328,336,368,379 r337,360,364,376 b360,366,394,404
b396,403,455,460 b442,454,455,517 b453,454,466,499 b465,465,503,505 b498,505,532,544 b517,531,536,556 b533,539,548,558 r529,539,545,551 b540,540,560,564 r550,552,559,571
r545,550,554,562 b549,549,569,576 b547,551,573,575 r558,567,573,586 r549,560,565,568 b549,563,564,568 b559,563,576,579 b577,578,606,620 r588,593,601,602 b586,592,611,613
r604,606,615,622 r598,609,610,625 b606,609,612,614 r607,609,612,622 r596,600,612,619 b592,598,610,612 b608,609,614,619 b613,613,622,623 b617,619,622,625 b619,621,627,629
b627,628,632,638 b631,632,640,643 r567,575,640,655 r444,498,566,587 b491,492,540,541 r501,512,540,551 b496,517,539,564 b534,548,577,589 r567,571,576,587 r534,555,570,577
r533,534,556,564 b530,534,555,560 b547,557,564,568 b559,563,566,575 r540,544,563,569 r514,533,544,548 r462,487,541,543 b468,482,488,501 r474,476,499,508 r409,413,475,522
b353,392,489,491 b482,489,518,522 b518,521,545,554 r522,536,540,541 b540,540,562,569 r543,561,567,572 b545,555,559,562 b552,552,574,578 b567,573,574,582 b570,573,584,584
r567,580,584,589 b578,581,585,591 r573,577,585,586 b570,574,585,588 b583,585,608,609 b601,607,613,614 r579,586,618,622 r563,576,585,590 b571,576,590,602 r580,584,585,594
r557,567,589,596 b567,567,579,582 b577,579,591,592 r543,583,584,585 r574,576,587,589 r544,554,581,584 b549,557,565,571 b546,564,573,574 r565,572,575,581 r526,556,572,578
r529,541,558,564 b538,540,557,559 r547,550,559,569 r537,541,551,559 r517,538,540,542 b493,537,538,544 b532,536,540,555 r531,532,537,540 b528,532,548,548 b545,546,554,560
b552,552,575,577 r565,573,575,581 b570,572,589,593 r579,586,592,595 b537,543,568,591 b568,570,582,592 r560,581,583,585 r572,576,581,590 b566,570,583,583 b579,583,589,591
b584,587,590,591 r553,582,590,593 r553,558,585,585 b551,558,579,583 r576,576,581,586 r570,573,579,580 b571,572,576,577 b567,574,587,591 b582,586,591,592 r587,589,591,593
b573,579,590,591 b583,588,589,592 r569,582,589,590 b573,580,584,586 r576,580,585,587 r557,563,579,580 r530,538,566,568 b535,538,542,549 b535,541,564,567 b555,563,571,574
r557,567,570,578 r522,543,568,569 r475,481,535,537 r429,455,466,476 b454,458,497,505 r462,491,495,498 b483,485,496,509 r411,423,486,490 r259,288,414,420 r130,139,278,313`
  .trim().split(/\s+/).map(s => [s[0] === 'r', ...s.slice(1).split(',').map(Number)]);

const SEEDS = {
  5: [522, 514, 525, 527],
  10: [529, 529, 529, 529, 528, 527, 527, 528, 530],
  20: [545, 537, 530, 522, 519, 521, 524, 522, 524, 525, 528, 531, 532, 531, 530, 527, 528, 527, 528]
};
const LONG = {
  60: '187,643 206,634 237,621 257,613 290,598 320,584 340,577 360,569 378,563 391,557 410,543 429,527 436,521 448,515 460,506 493,509 519,512 542,513 582,521 607,526 630,532 647,535 673,536 700,538 720,540 750,535 760,532 775,532 793,541 813,552 827,558 847,562 867,566 903,568 927,568 957,565 993,559 1013,553 1027,553 1047,556 1087,559 1110,559 1120,562 1130,564 1143,569 1160,572 1187,573 1217,571 1237,566 1257,559 1263,553 1268,547',
  120: '187,649 206,643 237,635 263,628 277,624 307,617 330,612 363,607 380,604 391,602 410,591 436,577 460,569 480,568 540,567 570,569 607,572 647,578 673,574 720,572 737,570 753,565 770,561 807,561 853,565 893,566 933,568 970,565 993,563 1027,564 1060,565 1093,567 1127,567 1170,569 1193,569 1220,568 1240,563 1253,560 1263,554 1268,547',
  240: '187,673 197,672 247,668 313,662 380,657 413,650 447,644 493,639 553,635 607,632 647,631 687,627 733,623 760,619 807,617 853,614 893,612 940,608 987,604 1020,601 1060,597 1100,595 1147,591 1187,588 1220,585 1247,581 1268,575'
};
const PROFILE = [
  [139, 52, 255, '#4696c6', '2.36% (11,837,304)', 164], [243, 48, 334, '#c4c4c4', '4.95% (24,838,698)', 267],
  [293, 48, 252, '#c4c4c4', '2.26% (11,371,298)', 317], [343, 48, 374, '#c4c4c4', '6.26% (31,448,517)', 367],
  [393, 48, 334, '#c4c4c4', '4.95% (24,880,117)', 417], [443, 48, 549, '#c4c4c4', '11.96% (60,089,503)', 467],
  [493, 48, 1253, '#e5929a', '34.98% (175,668,397)', 517], [543, 48, 1089, '#c4c4c4', '29.62% (148,745,046)', 567],
  [593, 48, 264, '#c4c4c4', '2.66% (13,368,655)', 617]
];
const PRICES = [['40,000', 161], ['35,000', 238], ['30,000', 314], ['25,000', 391], ['20,000', 468], ['15,000', 544], ['10,000', 621]];
const MONTHS = [['2020/12', 196, 185], ['2022/01', 529, 530], ['2023/01', 863, 864], ['2024/01', 1196, 1198]];

// bar heights above the usual low level; r/b is the bar colour
const VOLUMES = {
  0: 'r5', 1: 'b2', 2: 'r4', 3: 'b3', 4: 'r4', 5: 'b2', 6: 'r3', 7: 'r6', 8: 'r27', 9: 'b9', 10: 'b4', 11: 'r3', 12: 'b5', 13: 'r3', 14: 'b4', 15: 'b4', 16: 'b3', 17: 'r4', 18: 'r4', 28: 'r3', 29: 'r4', 30: 'b4', 31: 'r5', 32: 'b3',
  33: 'r15', 34: 'b13', 35: 'b8', 36: 'r12', 37: 'b5', 38: 'b4', 39: 'b3', 41: 'r4', 42: 'b3', 52: 'r4', 54: 'b4', 72: 'r10', 73: 'r28', 74: 'b4', 75: 'r6', 76: 'r11', 77: 'b4', 78: 'b4', 79: 'r3', 80: 'b4', 81: 'b4',
  87: 'r4', 88: 'b4', 89: 'b3', 90: 'r9', 91: 'r15', 92: 'b4', 93: 'b4', 110: 'r5', 111: 'b3', 113: 'r8', 115: 'r5', 116: 'b3', 117: 'b3', 118: 'b3', 119: 'r8', 120: 'b3', 121: 'b3', 124: 'r5', 125: 'r6', 126: 'b3', 130: 'b4',
  134: 'r5', 135: 'b3', 136: 'b3', 137: 'b3', 142: 'r7', 143: 'b3', 156: 'r5', 157: 'b3', 158: 'b3', 161: 'r6', 162: 'r20', 163: 'b11', 164: 'b4', 165: 'r5', 166: 'b2', 167: 'r9', 168: 'r26', 169: 'b13'
};
const VOL = CANDLES.map((c, i) => VOLUMES[i]
  ? [VOLUMES[i][0] === 'r', +VOLUMES[i].slice(1)]
  : [i % 7 === 2 || i % 7 === 3, i > 60 && i < 70 ? 1 : 2]);

const xOf = i => 186.5 + i * 6.402;
const average = (list, n, seeds) => list.map((v, i) => {
  if (seeds && i < seeds.length) return seeds[i];
  const part = list.slice(Math.max(0, i - n + 1), i + 1);
  return part.reduce((a, b) => a + b, 0) / part.length;
});

function scaler(el, x0, y0, w, h) {
  const sx = el.clientWidth / w, sy = el.clientHeight / h;
  return { X: x => Math.round((x - x0) * sx), Y: y => Math.round((y - y0) * sy) };
}
const rect = (x, y, w, h, fill) => `<rect x="${x}" y="${y}" width="${Math.max(w, 1)}" height="${Math.max(h, 1)}" fill="${fill}"/>`;
const text = (x, y, s, cls = '', anchor = 'start') => `<text x="${x}" y="${y + 4}" text-anchor="${anchor}" class="${cls}">${s}</text>`;
const line = (pts, color, { X, Y }) =>
  `<polyline class="ln" stroke="${color}" points="${pts.map(([x, y]) => `${X(x)}.5,${Y(y)}.5`).join(' ')}"/>`;

function drawPrice() {
  const el = document.getElementById('price'), s = scaler(el, LEFT, TOP, W, H), { X, Y } = s;
  const width = el.clientWidth, height = el.clientHeight;
  let out = '';
  for (const x of [184, 196, 529, 863, 1196]) out += rect(X(x), 1, 1, height - 3, '#e6e6e6');
  for (const [, y] of PRICES) out += rect(0, Y(y), width, 1, '#e6e6e6');
  for (const [y, h, end, fill] of PROFILE) out += rect(0, Y(y), X(end), Y(y + h) - Y(y), fill);
  for (const [, , end, , label, y] of PROFILE) {
    const short = X(end) < 112;
    out += text(short ? 4 : X(end), Y(y), label, '', short ? 'start' : 'end');
  }
  CANDLES.forEach(([up, hi, a, b, lo], i) => {
    const x = X(xOf(i)), fill = up ? UP : DOWN;
    out += rect(x, Y(hi), 1, Y(lo) - Y(hi), fill) + rect(x - 2, Y(a), 5, Y(b) - Y(a), fill);
  });
  for (const n of [240, 120, 60]) out += line(LONG[n].split(' ').map(p => p.split(',').map(Number)), COLORS[n], s);
  const close = CANDLES.map(([up, , a, b]) => up ? a : b);
  for (const n of [20, 10, 5]) out += line(average(close, n, SEEDS[n]).map((y, i) => [xOf(i), y]), COLORS[n], s);
  const bx = X(192), by = Y(509);
  out += text(1, Y(485), '배당락(0%)') + rect(bx, by - 18, 1, 14, '#f00') + `<path d="M${bx - 5} ${by - 5}h11l-5.500 5z" fill="#f00"/>`;
  out += rect(0, Y(183), width, 2, '#0000f0');
  out += `<rect x="${X(745)}.5" y="${Y(181)}.5" width="6" height="6" fill="#fff" stroke="#000"/>`;
  out += rect(width - 3, Y(130), 3, Y(279) - Y(130), UP) + rect(width - 3, Y(279), 3, Y(428) - Y(279), '#0000d0');
  const ax = X(1267), ay = Y(123);
  out += text(ax - 21, ay, '최고 42,050(2024/03/18, -1.43%)', 't-up', 'end');
  out += `<path d="M${ax - 20} ${ay}.5h20m-5-4l5 4l-5 4" fill="none" stroke="#d00000"/>`;
  const lx = X(649), ly = Y(660);
  out += text(lx + 20, ly, '최저 7,860(2022/05/09, +427.35%)', 't-down');
  out += `<path d="M${lx + 20} ${ly}.5h-20m5-4l-5 4l5 4" fill="none" stroke="#0000c8"/>`;
  el.innerHTML = out;
}

function drawPriceAxis() {
  const el = document.getElementById('priceAxis'), { Y } = scaler(el, 0, TOP, 65, H);
  let out = '';
  for (let k = 0; k < 36; k++) {
    const y = 115 + k * 15.33;
    if (y < 680) out += rect(0, Y(y), 2, 1, '#b4b4b4');
  }
  for (const [label, y] of PRICES) out += rect(0, Y(y), 4, 1, '#b4b4b4') + text(10, Y(y), label);
  const y = Y(131);
  out += rect(7, y, 50, 28, '#f00') + `<path d="M0 ${y + 8}l5-5v10z" fill="#e00000"/>`;
  out += `<g fill="#fff">${text(8, y + 7, '41,450')}${text(8, y + 21, '(28.13%)')}</g>`;
  out += `<rect x="-.5" y="${Y(176)}.5" width="41" height="15" fill="#e0ffe0" stroke="#000"/>` + text(2, Y(184), '38,500');
  el.innerHTML = out;
}

function drawVolume() {
  const el = document.getElementById('volume'), s = scaler(el, LEFT, 691, W, 47), { X, Y } = s;
  let out = rect(0, Y(711), el.clientWidth, 1, '#e6e6e6');
  for (const x of [184, 196, 529, 863, 1196]) out += rect(X(x), 1, 1, el.clientHeight, '#e6e6e6');
  VOL.forEach(([up, h], i) => { out += rect(X(xOf(i)) - 2, Y(737 - h), 5, Y(737) - Y(737 - h), up ? UP : DOWN); });
  const heights = VOL.map(v => v[1]);
  for (const n of [20, 5]) out += line(average(heights, n).map((h, i) => [xOf(i), 736 - h]), COLORS[n], s);
  out += line([[187, 733], [400, 733], [440, 732], [515, 732], [600, 733], [850, 733], [980, 733], [1030, 732], [1268, 734]], COLORS[60], s);
  out += line([[187, 733], [470, 732], [660, 733], [840, 732], [1060, 733], [1268, 733]], COLORS[120], s);
  el.innerHTML = out;

  const axis = document.getElementById('volumeAxis'), { Y: AY } = scaler(axis, 0, 691, 65, 47);
  let marks = text(53, AY(711), '25,000K', '', 'end') + text(53, AY(732), '0K', '', 'end');
  for (const y of [711, 716, 721, 726, 731, 736]) marks += rect(0, AY(y), y === 711 || y === 736 ? 4 : 2, 1, '#b4b4b4');
  axis.innerHTML = marks;
}

function drawDates() {
  const el = document.getElementById('dates'), { X } = scaler(el, LEFT, 739, W, 16);
  el.innerHTML = MONTHS.map(([label, tick, x]) => rect(X(tick), 0, 1, 5, '#b4b4b4') + text(X(x), 8, label)).join('');
}

function draw() { drawPrice(); drawPriceAxis(); drawVolume(); drawDates(); }
draw();
window.addEventListener('resize', draw);
```
